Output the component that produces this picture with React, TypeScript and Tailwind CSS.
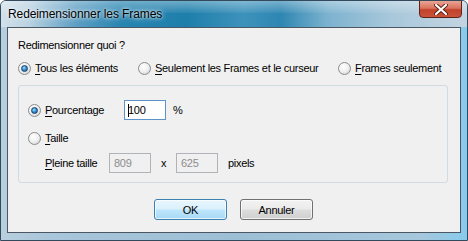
import React from 'react';

const ui = { fontFamily: '"Liberation Sans", Arial, sans-serif' };

function Radio({ checked }: { checked?: boolean }) {
  return (
    <span className="relative inline-flex h-[13px] w-[13px] shrink-0 items-center justify-center rounded-full border border-[#8a8c8e] bg-[radial-gradient(circle_at_40%_35%,#ffffff_0%,#f2f2f2_45%,#c9cbcd_100%)]">
      {checked && (
        <span className="h-[7px] w-[7px] rounded-full border border-[#17406a] bg-[radial-gradient(circle_at_40%_35%,#9fe0ff_0%,#3a94d2_45%,#0f4f8c_100%)]" />
      )}
    </span>
  );
}

// underline the mnemonic letter
function Label({ first, rest }: { first: string; rest: string }) {
  return (
    <span>
      <span className="underline underline-offset-[2px]">{first}</span>
      {rest}
    </span>
  );
}

function TextBox({ value, active }: { value: string; active?: boolean }) {
  return (
    <div
      className={
        active
          ? 'flex h-[20px] w-[42px] items-center border border-[#5c93c8] bg-white pl-[3px] text-[#000]'
          : 'flex h-[20px] w-[42px] items-center border border-[#b0b4b8] bg-[#f0f0f0] pl-[4px] text-[#8d8d8d]'
      }
    >
      {active && <span className="mr-[-1px] h-[13px] w-px bg-black" />}
      <span>{value}</span>
    </div>
  );
}

export default function App() {
  return (
    <div
      className="relative flex h-[241px] w-[468px] flex-col overflow-hidden rounded-t-[6px] border border-[#33495c] bg-[linear-gradient(90deg,#b8cfdf_0%,#a9c6da_10%,#9dbfd6_50%,#a6c7dc_90%,#86cbec_100%)]"
      style={ui}
    >
      {/* title bar */}
      <div className="relative flex h-[26px] shrink-0 items-center bg-[linear-gradient(90deg,#d3e1ea_0%,#b9d2e1_6%,#5e9fc4_16%,#2784b0_26%,#1f7fab_40%,#3d92bb_52%,#2e86b2_60%,#7cb2cf_70%,#a9c8db_84%,#c3d4e1_100%)] pl-[7px]">
        <div className="absolute inset-x-0 top-0 h-[12px] bg-[linear-gradient(180deg,rgba(255,255,255,0.35),rgba(255,255,255,0.05))]" />
        <span className="relative text-[12px] tracking-[-0.1px] text-black [text-shadow:0_0_6px_rgba(255,255,255,0.9),0_0_3px_rgba(255,255,255,0.9)]">
          Redeimensionner les Frames
        </span>
        <div className="absolute right-[5px] top-[-1px] flex h-[18px] w-[43px] items-center justify-center rounded-b-[4px] border border-[#5e2318] bg-[linear-gradient(180deg,#e9a595_0%,#d9735f_45%,#c2412a_55%,#c9533a_100%)]">
          <svg width="14" height="11" viewBox="0 0 14 11">
            <path d="M2 1 L12 10 M12 1 L2 10" stroke="#5a2014" strokeWidth="4" strokeLinecap="round" />
            <path d="M2 1 L12 10 M12 1 L2 10" stroke="#ffffff" strokeWidth="2.2" strokeLinecap="round" />
          </svg>
        </div>
      </div>

      {/* client area */}
      <div className="mx-[6px] flex h-[206px] flex-col border border-[#4b5864] bg-[#f0f0f0] text-[11px] leading-[14px] tracking-[-0.3px] text-black">
        <div className="ml-[10px] mt-[10px]">Redimensionner quoi ?</div>

        <div className="mt-[9px] flex items-center">
          <div className="ml-[10px] flex w-[120px] items-center gap-[4px]">
            <Radio checked />
            <Label first="T" rest="ous les éléments" />
          </div>
          <div className="flex w-[200px] items-center gap-[4px]">
            <Radio />
            <Label first="S" rest="eulement les Frames et le curseur" />
          </div>
          <div className="flex items-center gap-[4px]">
            <Radio />
            <Label first="F" rest="rames seulement" />
          </div>
        </div>

        {/* group box */}
        <div className="ml-[10px] mt-[10px] flex w-[430px] flex-col rounded-[3px] border border-[#d0dae1] pb-[9px] pl-[9px] pt-[14px]">
          <div className="flex h-[20px] items-center">
            <div className="flex w-[96px] items-center gap-[4px]">
              <Radio checked />
              <Label first="P" rest="ourcentage" />
            </div>
            <TextBox value="100" active />
            <span className="ml-[7px]">%</span>
          </div>
          <div className="mt-[11px] flex h-[14px] items-center gap-[4px]">
            <Radio />
            <Label first="T" rest="aille" />
          </div>
          <div className="mt-[8px] flex h-[20px] items-center pl-[17px]">
            <span className="w-[64px]">
              <Label first="P" rest="leine taille" />
            </span>
            <TextBox value="809" />
            <span className="ml-[10px] w-[15px]">x</span>
            <TextBox value="625" />
            <span className="ml-[10px]">pixels</span>
          </div>
        </div>

        {/* buttons */}
        <div className="mt-[16px] flex justify-center gap-[13px] pr-[1px]">
          <button className="h-[21px] w-[73px] rounded-[3px] border border-[#3c7fb1] bg-[linear-gradient(180deg,#eaf6fd_0%,#d9f0fc_48%,#bee6fd_52%,#a7d9f5_100%)] text-[11px] shadow-[inset_0_0_0_1px_rgba(255,255,255,0.7)]">
            OK
          </button>
          <button className="h-[21px] w-[73px] rounded-[3px] border border-[#707070] bg-[linear-gradient(180deg,#f2f2f2_0%,#ebebeb_48%,#dddddd_52%,#cfcfcf_100%)] text-[11px] shadow-[inset_0_0_0_1px_rgba(255,255,255,0.7)]">
            Annuler
          </button>
        </div>
      </div>
    </div>
  );
}
